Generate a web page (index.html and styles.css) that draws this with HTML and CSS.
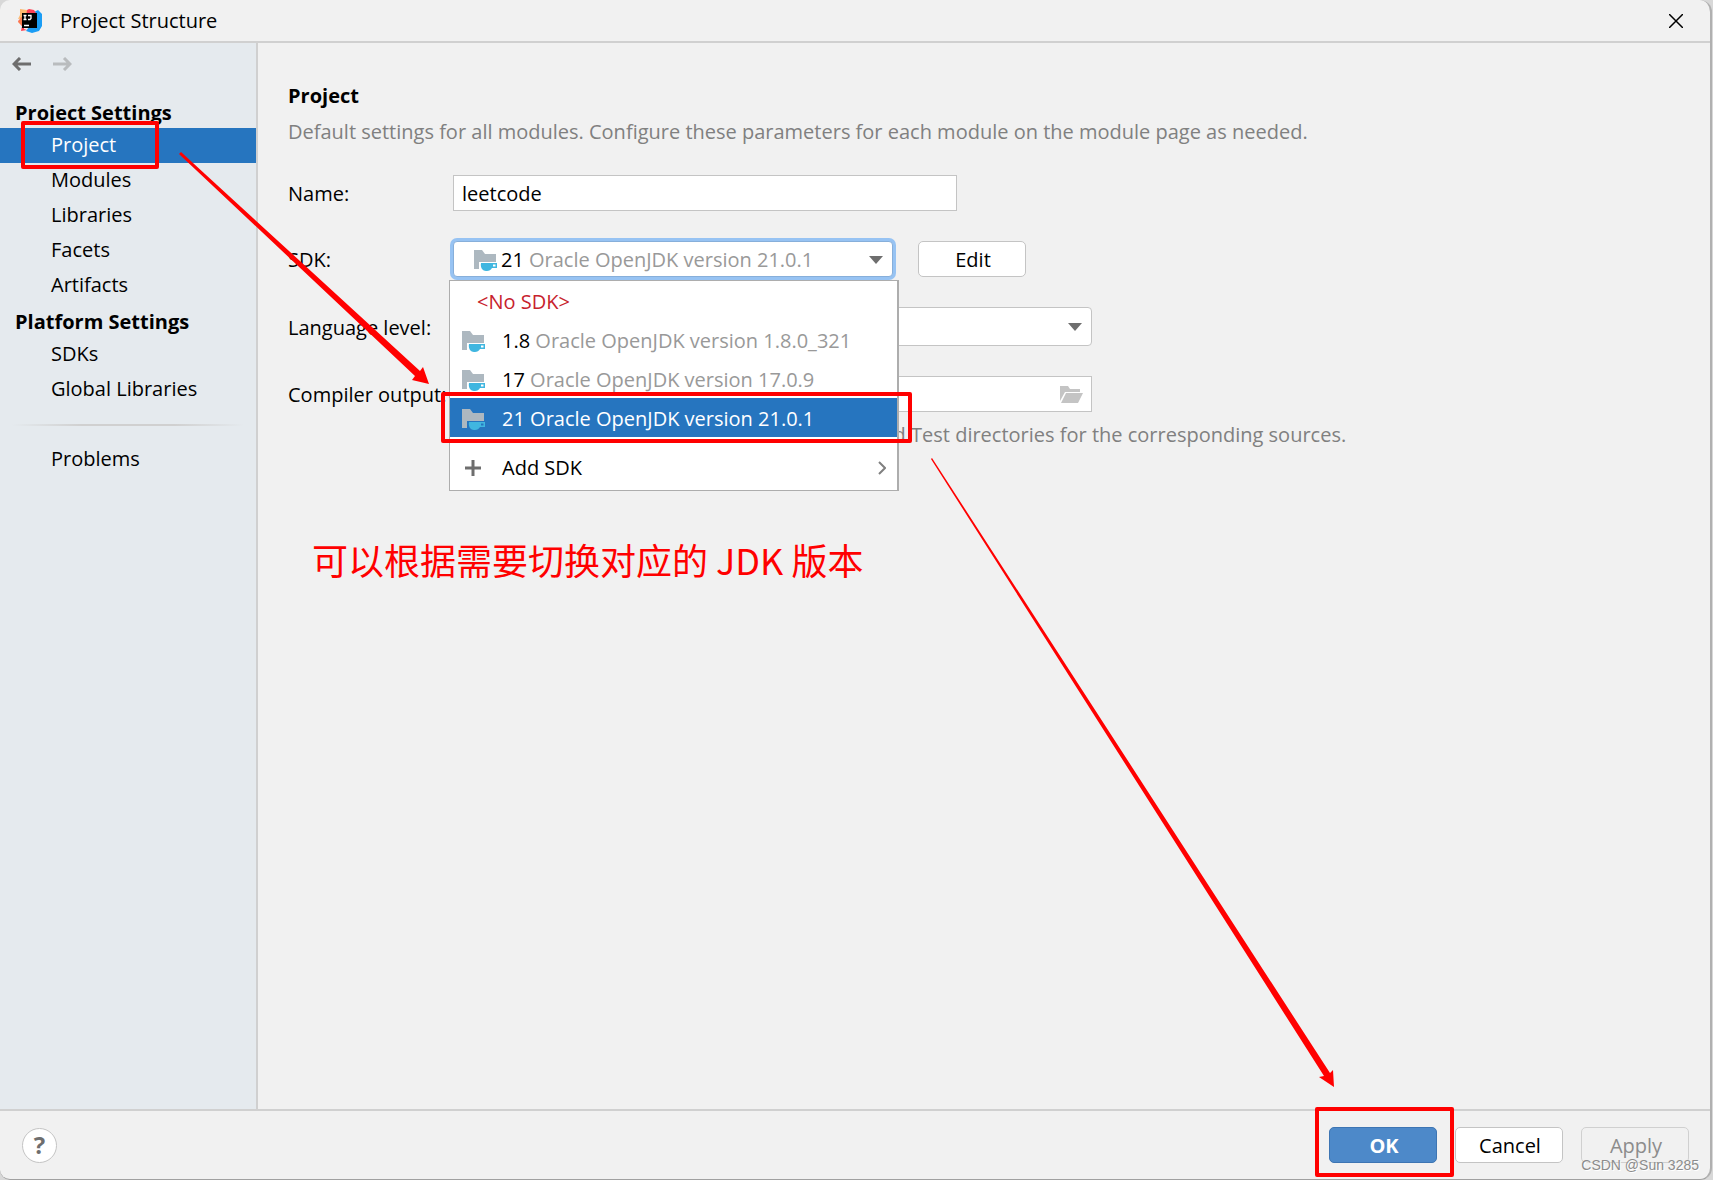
FILE: index.html
```html
<!DOCTYPE html>
<html lang="en">
<head>
    <meta charset="UTF-8">
    <meta name="viewport" content="width=device-width, initial-scale=1.0">
    <title>Project Structure</title>
    <link rel="stylesheet" href="styles.css">
</head>
<body>
    <svg class="defs" aria-hidden="true">
        <symbol id="sdk-icon" viewBox="0 0 24 24">
            <path fill="#adb8c0" d="M1 2h8l3 4h11v8H6v7H1z"/>
            <path fill="#40b6e0" fill-rule="evenodd" d="M8 15h16v5h-5c-1 2-3 3-5 3h-1c-3 0-6-3-5-8zM20 16.500v2h2.500v-2z"/>
        </symbol>
    </svg>
    <div class="window">
        <header class="title-bar">
            <svg class="logo" viewBox="0 0 24 24">
                <path fill="#1b9df5" d="M16 3l4-2 4 4v12l-3 5-7 2-6-2 3-4 6-3z"/>
                <path fill="#fe4155" d="M7 2l4-2 5 1 2 3-6 4H6v12l3 1-6 1 1-5-4-5 4-3z"/>
                <path fill="#fdb970" d="M2 0l7 1-1 8-8 1 2-4z"/>
                <path fill="#fc7a4d" d="M0 13l3-5 3 1-2 8z"/>
                <path fill="#000" d="M4 4h15v15H4z"/>
                <path fill="none" stroke="#fff" stroke-width="1.300" d="M5.500 6.500h3M7 6.500v4M5.500 10.500h3M10 6.500h3v3l-1 1h-2M6 16.500h5"/>
            </svg>
            <h1>Project Structure</h1>
            <button class="close-button" aria-label="Close">
                <svg width="14" height="14" viewBox="0 0 14 14"><path fill="none" stroke="#000" stroke-width="1.500" d="M0 0l14 14M14 0L0 14"/></svg>
            </button>
        </header>

        <div class="main">
            <nav class="sidebar">
                <div class="history">
                    <button aria-label="Back"><svg width="20" height="14" viewBox="0 0 20 14"><path d="M19 7H2M8 1L2 7l6 6"/></svg></button>
                    <button aria-label="Forward" disabled><svg width="20" height="14" viewBox="0 0 20 14"><path d="M1 7h17M12 1l6 6-6 6"/></svg></button>
                </div>
                <h2>Project Settings</h2>
                <a href="#project" class="active">Project</a>
                <a href="#modules">Modules</a>
                <a href="#libraries">Libraries</a>
                <a href="#facets">Facets</a>
                <a href="#artifacts">Artifacts</a>
                <h2>Platform Settings</h2>
                <a href="#sdks">SDKs</a>
                <a href="#global-libraries">Global Libraries</a>
                <div class="separator"></div>
                <a href="#problems">Problems</a>
            </nav>

            <main class="content" id="project">
                <h2>Project</h2>
                <p class="description">Default settings for all modules. Configure these parameters for each module on the module page as needed.</p>
                <div class="form">
                    <label for="name">Name:</label>
                    <input type="text" id="name" class="name-input" value="leetcode">

                    <label for="sdk">SDK:</label>
                    <div class="sdk-row">
                        <div class="sdk-box">
                            <select id="sdk">
                                <option>21</option>
                                <option>17</option>
                                <option>1.8</option>
                            </select>
                            <svg class="sdk-icon"><use href="#sdk-icon"/></svg>
                            <span class="sdk-version">Oracle OpenJDK version 21.0.1</span>
                            <svg class="arrow" viewBox="0 0 14 8"><path d="M0 0h14L7 8z"/></svg>
                            <ul class="popup">
                                <li class="none">&lt;No SDK&gt;</li>
                                <li><svg class="sdk-icon"><use href="#sdk-icon"/></svg><span>1.8 <em>Oracle OpenJDK version 1.8.0_321</em></span></li>
                                <li><svg class="sdk-icon"><use href="#sdk-icon"/></svg><span>17 <em>Oracle OpenJDK version 17.0.9</em></span></li>
                                <li class="selected"><svg class="sdk-icon"><use href="#sdk-icon"/></svg><span>21 <em>Oracle OpenJDK version 21.0.1</em></span></li>
                                <li class="add">
                                    <svg class="sdk-icon" viewBox="0 0 24 24"><path fill="none" stroke="#6e6e6e" stroke-width="3" d="M4 12h16M12 4v16"/></svg>
                                    <span>Add SDK</span>
                                    <svg class="chevron" viewBox="0 0 8 14"><path d="M1 1l6 6-6 6"/></svg>
                                </li>
                            </ul>
                        </div>
                        <button class="button">Edit</button>
                    </div>

                    <label for="level">Language level:</label>
                    <div class="level-box">
                        <select id="level">
                            <option>SDK default</option>
                        </select>
                        <svg class="arrow" viewBox="0 0 14 8"><path d="M0 0h14L7 8z"/></svg>
                    </div>

                    <label for="output">Compiler output:</label>
                    <div class="output-box">
                        <input type="text" id="output">
                        <button aria-label="Browse">
                            <svg width="23" height="17" viewBox="0 0 23 17"><path fill="#c4c4c4" d="M0 0h8l2 3h10v3H5L0 15zM6 7h17l-5 10H1z"/></svg>
                        </button>
                    </div>
                    <p class="hint">Used for module subdirectories, Production and Test directories for the corresponding sources.</p>
                </div>
                <p class="note" lang="zh">可以根据需要切换对应的 JDK 版本</p>
            </main>
        </div>

        <footer class="footer">
            <button class="help-button" aria-label="Help">?</button>
            <button class="button primary">OK</button>
            <button class="button">Cancel</button>
            <button class="button" disabled>Apply</button>
        </footer>
    </div>

    <!-- red marks over the dialog -->
    <svg class="marks" aria-hidden="true">
        <rect x="23" y="123" width="134" height="44"/>
        <rect x="443" y="394" width="467" height="47"/>
        <rect x="1317" y="1109" width="135" height="66"/>
        <path d="M179 154L181 152 420 371 423 367 429 384 412 380 415 376z"/>
        <path d="M931 459L932 458 1330 1073 1333 1070 1334 1087 1319 1077 1324 1076z"/>
    </svg>
    <div class="watermark">CSDN @Sun 3285</div>
</body>
</html>
```
FILE: styles.css
```css
* {
    box-sizing: border-box;
}

body {
    margin: 0;
    background: #d8d8d8;
    color: #000;
    font-family: "Open Sans", "Noto Sans CJK SC", sans-serif;
    font-size: 20px;
    line-height: 26px;
}

h1, h2, p, ul {
    margin: 0;
    padding: 0;
}

h1, h2 {
    font-size: inherit;
}

button, input, select {
    font: inherit;
    color: inherit;
}

.defs {
    position: absolute;
    width: 0;
    height: 0;
}

.window {
    display: flex;
    flex-direction: column;
    min-height: 100vh;
    margin-right: 1px;
    background: #f1f1f1;
    border-right: 2px solid #b0b0b0;
    border-bottom: 1px solid #a0a0a0;
    border-radius: 10px 12px 12px 10px;
    overflow: hidden;
}

.title-bar {
    display: flex;
    align-items: center;
    height: 43px;
    padding: 0 27px 0 18px;
    border-bottom: 2px solid #d0d0d0;
}

.title-bar h1 {
    margin-left: 18px;
    font-weight: normal;
}

.logo {
    width: 24px;
    height: 24px;
}

.close-button {
    display: flex;
    margin-left: auto;
    padding: 0;
    border: none;
    background: none;
}

.main {
    display: flex;
    flex: 1;
}

.sidebar {
    width: 258px;
    background: #e5eaee;
    border-right: 2px solid #d0d0d0;
}

.history {
    display: flex;
    gap: 20px;
    height: 51px;
    padding: 14px 12px;
}

.history button {
    display: flex;
    padding: 0;
    border: none;
    background: none;
}

.history path {
    fill: none;
    stroke: #6e6e6e;
    stroke-width: 3;
}

.history button:disabled path {
    stroke: #b9bcbe;
}

.sidebar h2 {
    height: 34px;
    padding-left: 15px;
    line-height: 37px;
}

.sidebar a {
    display: block;
    height: 35px;
    padding-left: 51px;
    line-height: 34px;
    color: #000;
    text-decoration: none;
}

.sidebar a.active {
    background: #2675bf;
    color: #fff;
}

.separator {
    height: 2px;
    margin: 17px 12px 16px;
    background: linear-gradient(90deg, transparent, #d0d0d0 30%, #d0d0d0 70%, transparent);
}

.content {
    flex: 1;
    padding: 40px 30px;
}

.description {
    margin-top: 10px;
    color: #808080;
}

.form {
    display: grid;
    grid-template-columns: 165px 1fr;
    grid-template-rows: 36px 36px 39px 36px;
    row-gap: 30px;
    align-items: center;
    margin-top: 30px;
}

.form label {
    padding-top: 2px;
}

.name-input {
    width: 504px;
    height: 36px;
    padding: 1px 8px 0;
    border: 1px solid #c4c4c4;
    background: #fff;
}

.sdk-row {
    display: flex;
    gap: 25px;
}

.sdk-box {
    position: relative;
    width: 440px;
}

.sdk-box select, .level-box select {
    appearance: none;
    display: block;
    width: 100%;
    height: 36px;
    padding: 2px 47px 0;
    border: 1px solid #87afda;
    border-radius: 4px;
    background: #fff;
    box-shadow: 0 0 0 3px #97c3f3;
}

.sdk-box > .sdk-icon {
    position: absolute;
    left: 20px;
    top: 7px;
}

.sdk-icon {
    width: 24px;
    height: 24px;
}

.sdk-version {
    position: absolute;
    left: 76px;
    top: 6px;
    color: #999;
}

.arrow {
    position: absolute;
    right: 10px;
    top: 15px;
    width: 14px;
    height: 8px;
    fill: #6e6e6e;
}

.popup {
    position: absolute;
    z-index: 1;
    left: -4px;
    top: 39px;
    width: 450px;
    border: 1px solid #adadad;
    border-right-width: 2px;
    background: #fff;
    list-style: none;
}

.popup li {
    display: flex;
    align-items: center;
    gap: 17px;
    height: 39px;
    padding: 2px 11px 0;
}

.popup em {
    color: #999;
    font-style: normal;
}

.popup .none {
    padding-left: 27px;
    color: #c7222d;
}

.popup .selected, .popup .selected em {
    background: #2675bf;
    color: #fff;
}

.popup .add {
    height: 45px;
    margin-top: 8px;
    padding-top: 0;
}

.chevron {
    width: 8px;
    height: 14px;
    margin-left: auto;
    fill: none;
    stroke: #808080;
    stroke-width: 2;
}

.button {
    width: 108px;
    height: 36px;
    padding: 2px 0 0 2px;
    border: 1px solid #c4c4c4;
    border-radius: 5px;
    background: #fff;
}

.button:disabled {
    border-color: #d0d0d0;
    background: none;
    color: #8c8c8c;
}

.button.primary {
    border-color: #3d75b3;
    background: #4d89c9;
    color: #fff;
    font-weight: bold;
}

.level-box {
    position: relative;
    width: 639px;
}

.level-box select {
    height: 39px;
    padding: 0 8px;
    border-color: #c4c4c4;
    box-shadow: none;
}

.level-box .arrow {
    top: 16px;
}

.output-box {
    display: flex;
    align-items: center;
    width: 639px;
    height: 36px;
    padding-right: 8px;
    border: 1px solid #c4c4c4;
    background: #fff;
}

.output-box input {
    flex: 1;
    border: none;
    background: none;
}

.output-box button {
    display: flex;
    padding: 0;
    border: none;
    background: none;
}

.hint {
    grid-column: 2;
    margin-top: -20px;
    padding-left: 4px;
    color: #808080;
}

.note {
    margin: 85px 24px 0;
    color: #f00;
    font-family: "Noto Sans CJK SC", sans-serif;
    font-size: 36px;
    line-height: 52px;
}

.footer {
    display: flex;
    align-items: center;
    gap: 18px;
    height: 70px;
    padding: 0 21px 0 22px;
    border-top: 2px solid #d0d0d0;
}

.help-button {
    width: 35px;
    height: 35px;
    margin-right: auto;
    padding: 0;
    border: 1px solid #c4c4c4;
    border-radius: 50%;
    background: #fff;
    color: #6e6e6e;
    font-size: 24px;
    font-weight: bold;
}

.marks {
    position: absolute;
    z-index: 2;
    left: 0;
    top: 0;
    width: 100%;
    height: 100%;
    pointer-events: none;
}

.marks rect {
    fill: none;
    stroke: #f00;
    stroke-width: 4;
    stroke-linejoin: round;
}

.marks path {
    fill: #f00;
}

.watermark {
    position: absolute;
    z-index: 2;
    right: 14px;
    bottom: 5px;
    color: #8c8c8c;
    font-family: "Liberation Sans", sans-serif;
    font-size: 14px;
    line-height: 20px;
    text-shadow: 1px 1px #fff;
}
```
